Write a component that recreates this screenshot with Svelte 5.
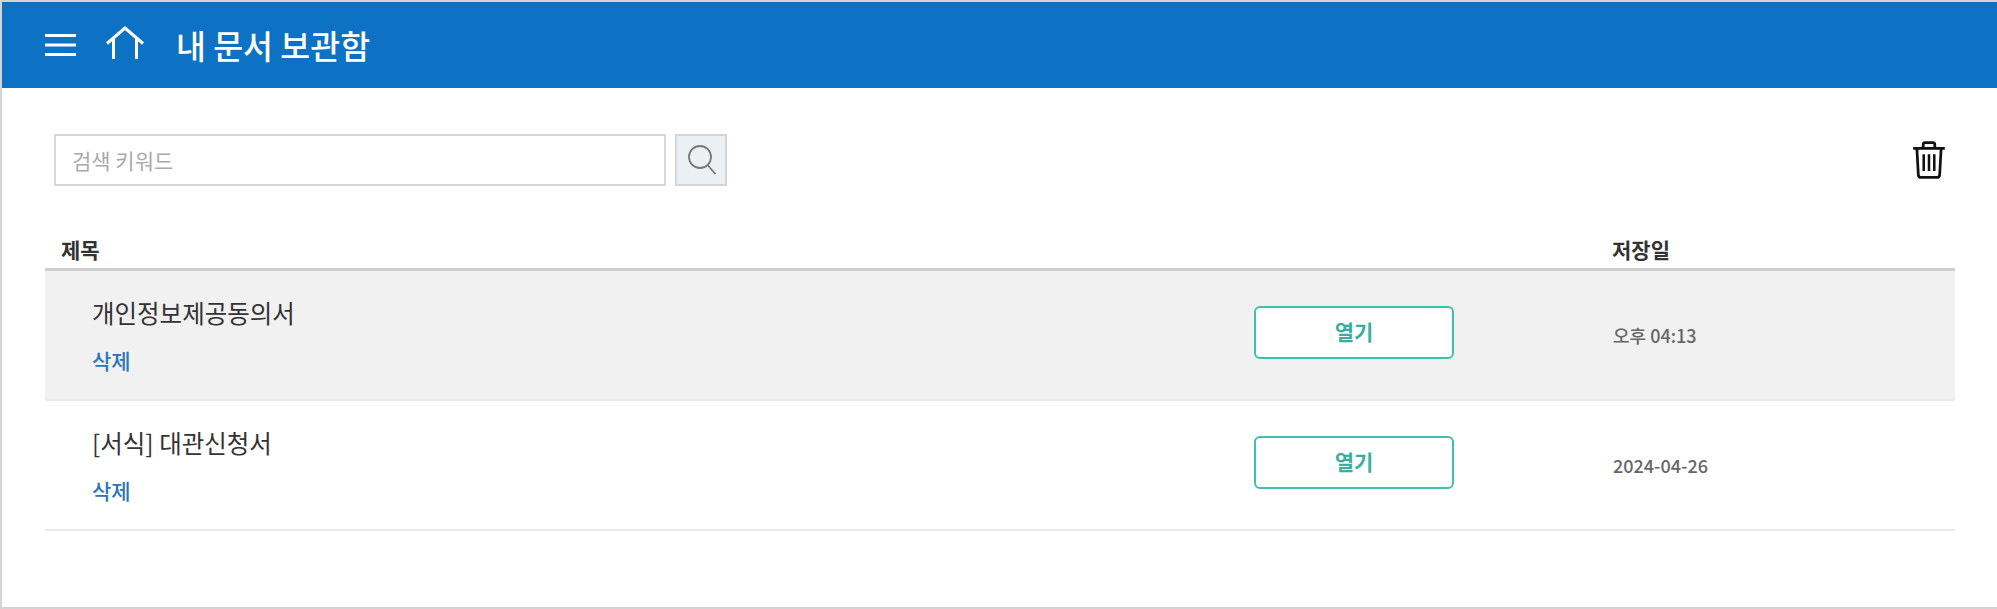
<script>
	const docs = [
		{ title: '개인정보제공동의서', date: '오후 04:13', active: true },
		{ title: '[서식] 대관신청서', date: '2024-04-26', active: false }
	];
</script>

<div class="page">
	<header class="topbar">
		<button type="button" class="icon-btn menu" aria-label="메뉴">
			<svg width="31" height="26" viewBox="0 0 31 26" fill="none" stroke="#fff" stroke-width="3">
				<path d="M0 3.5h31M0 13h31M0 22.5h31" />
			</svg>
		</button>
		<button type="button" class="icon-btn home" aria-label="홈">
			<svg width="38" height="34" viewBox="0 0 38 34" fill="none" stroke="#fff" stroke-width="3">
				<path d="M1 17.5 19 2l18 15.5" />
				<path d="M7.5 13v20M30.5 13v20" />
			</svg>
		</button>
		<h1>내 문서 보관함</h1>
	</header>

	<main class="content">
		<div class="toolbar">
			<input type="text" placeholder="검색 키워드" />
			<button type="button" class="search" aria-label="검색">
				<svg width="30" height="32" viewBox="0 0 30 32" fill="none" stroke="#777" stroke-width="1.8">
					<circle cx="13" cy="13" r="11" />
					<path d="m20.5 21 8 9" />
				</svg>
			</button>
			<button type="button" class="trash" aria-label="전체 삭제">
				<svg width="34" height="38" viewBox="0 0 32 36" fill="none" stroke="#111" stroke-width="2.6">
					<path d="M1 7h30" />
					<path d="M10.5 7V3.5q0-2 2-2h7q2 0 2 2V7" />
					<path d="M4.5 7l1.400 25q.2 2.500 2.600 2.500h15q2.400 0 2.600-2.500L27.500 7" />
					<path d="M11 12.500v16M16 12.500v16M21 12.500v16" stroke-width="2.400" />
				</svg>
			</button>
		</div>

		<div class="table-head">
			<span class="col-title">제목</span>
			<span class="col-date">저장일</span>
		</div>

		{#each docs as doc}
			<div class="row" class:active={doc.active}>
				<div class="info">
					<div class="title">{doc.title}</div>
					<a class="del" href="#top">삭제</a>
				</div>
				<button type="button" class="open">열기</button>
				<div class="date">{doc.date}</div>
			</div>
		{/each}
	</main>
</div>

<style>
	:global(body) {
		margin: 0;
		background: #fff;
	}

	.page {
		box-sizing: border-box;
		height: 609px;
		border: solid #d4d4d4;
		border-width: 2px 0 2px 2px;
		font-family: 'Noto Sans CJK KR', 'Noto Sans', sans-serif;
		color: #333;
		overflow: hidden;
	}

	.topbar {
		display: flex;
		align-items: center;
		height: 86px;
		padding-left: 43px;
		background: #0d72c3;
		color: #fff;
	}

	.icon-btn {
		display: flex;
		padding: 0;
		border: 0;
		background: none;
	}

	.menu {
		margin-right: 30px;
	}

	.home {
		margin-right: 32px;
		margin-bottom: 5px;
	}

	h1 {
		margin: 0;
		font-size: 32.5px;
		font-weight: 500;
		line-height: 1;
	}

	.content {
		padding: 0 42px 0 43px;
	}

	.toolbar {
		display: flex;
		align-items: center;
		height: 52px;
		padding: 46px 0 0 9px;
	}

	input {
		box-sizing: border-box;
		width: 612px;
		height: 52px;
		padding: 0 16px;
		border: 2px solid #d6d6d6;
		font: inherit;
		font-size: 21px;
		outline: none;
	}

	input::placeholder {
		color: #aaa;
	}

	.search {
		display: flex;
		align-items: center;
		justify-content: center;
		box-sizing: border-box;
		width: 52px;
		height: 52px;
		margin-left: 9px;
		padding: 0 0 0 2px;
		border: 2px solid #d6d6d6;
		background: #edf0f2;
	}

	.trash {
		display: flex;
		margin-left: auto;
		margin-right: 9px;
		margin-top: -1px;
		padding: 0;
		border: 0;
		background: none;
	}

	.table-head {
		display: flex;
		justify-content: space-between;
		align-items: center;
		height: 34px;
		margin-top: 48px;
		padding-left: 16px;
		border-bottom: 3px solid #cfcfcf;
		font-size: 21px;
		font-weight: 700;
		line-height: 1;
		color: #333;
	}

	.col-title,
	.col-date {
		margin-top: -3px;
	}

	.col-date {
		width: 343px;
	}

	.row {
		display: flex;
		align-items: center;
		box-sizing: border-box;
		height: 130px;
		padding-left: 47px;
		border-bottom: 2px solid #e9e9e9;
	}

	.row.active {
		background: #f1f1f1;
	}

	.info {
		width: 1162px;
	}

	.title {
		font-size: 24.5px;
		line-height: 36px;
		margin-top: -2px;
		color: #333;
	}

	.del {
		display: block;
		margin-top: 15px;
		font-size: 21px;
		line-height: 28px;
		font-weight: 500;
		color: #2a75bb;
		text-decoration: none;
	}

	.open {
		box-sizing: border-box;
		width: 200px;
		height: 53px;
		margin-right: 159px;
		margin-top: -5px;
		padding: 0 0 4px;
		border: 2px solid #3dbfb1;
		border-radius: 6px;
		background: #fff;
		color: #3aaea1;
		font: inherit;
		font-size: 21px;
		font-weight: 700;
	}

	.date {
		font-size: 18px;
		font-weight: 500;
		color: #666;
		margin-top: -1px;
	}
</style>
